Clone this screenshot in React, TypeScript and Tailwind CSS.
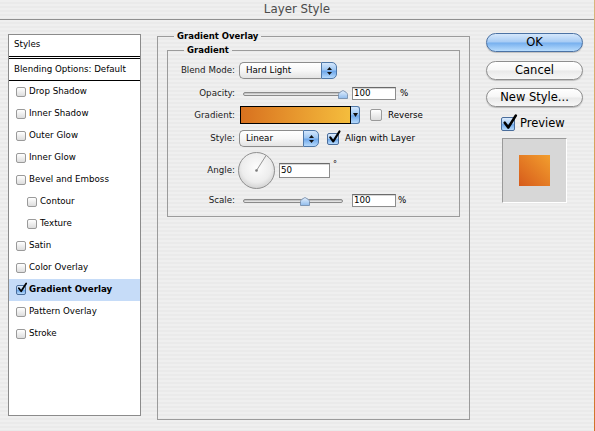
import type { ReactNode } from 'react'

type Effect = { name: string; sub?: boolean; on?: boolean }

const effects: Effect[] = [
  { name: 'Drop Shadow' },
  { name: 'Inner Shadow' },
  { name: 'Outer Glow' },
  { name: 'Inner Glow' },
  { name: 'Bevel and Emboss' },
  { name: 'Contour', sub: true },
  { name: 'Texture', sub: true },
  { name: 'Satin' },
  { name: 'Color Overlay' },
  { name: 'Gradient Overlay', on: true },
  { name: 'Pattern Overlay' },
  { name: 'Stroke' },
]

const boxSizes = {
  sm: 'w-[10px] h-[10px]',
  md: 'w-[12px] h-[12px]',
  lg: 'w-[14px] h-[14px]',
}

function CheckBox({ on = false, size = 'sm' }: { on?: boolean; size?: keyof typeof boxSizes }) {
  return (
    <span
      className={`relative block shrink-0 rounded-[2px] border ${boxSizes[size]} ${
        on
          ? 'border-[#4a6d9b] bg-[linear-gradient(to_bottom,#dcebfc_0%,#a9cdf4_45%,#6fa8ea_55%,#b9dcfc_100%)]'
          : 'border-[#9a9a9a] bg-linear-to-b from-white to-[#dddddd]'
      }`}
    >
      {on && (
        <svg viewBox="0 0 12 12" className="absolute left-[0px] top-[-3px] h-[125%] w-[125%] overflow-visible">
          <path
            d="M2.2 6.2 L5 10 L11 0.5"
            fill="none"
            stroke="#000"
            strokeWidth="2.1"
            strokeLinecap="round"
            strokeLinejoin="round"
          />
        </svg>
      )}
    </span>
  )
}

function Select({ value, width }: { value: string; width: string }) {
  return (
    <div className={`flex h-[17px] shrink-0 ${width}`}>
      <div className="flex flex-1 items-center rounded-l-[5px] border border-r-0 border-[#8c8c8c] bg-linear-to-b from-white via-[#f7f7f7] to-[#e4e4e4] pl-[6px]">
        {value}
      </div>
      <div className="flex w-[16px] flex-col items-center justify-center gap-[2px] rounded-r-[5px] border border-[#4f78a8] bg-[linear-gradient(to_bottom,#d4e7fc_0%,#9ec7f3_45%,#6ea7ea_55%,#b6dafc_100%)]">
        <svg width="5" height="3" viewBox="0 0 5 3">
          <path d="M0 3 L2.5 0 L5 3 Z" fill="#111" />
        </svg>
        <svg width="5" height="3" viewBox="0 0 5 3">
          <path d="M0 0 L2.5 3 L5 0 Z" fill="#111" />
        </svg>
      </div>
    </div>
  )
}

function Slider({ thumb }: { thumb: string }) {
  return (
    <div className="relative ml-[4px] flex h-[13px] w-[100px] shrink-0 items-center">
      <div className="h-[4px] w-full rounded-full border border-[#8a8a8a] bg-linear-to-b from-[#b9b9b9] to-[#f0f0f0]" />
      <svg width="10" height="9" viewBox="0 0 10 9" className={`absolute top-[3px] ${thumb}`}>
        <defs>
          <linearGradient id="thumbFill" x1="0" y1="0" x2="0" y2="1">
            <stop offset="0" stopColor="#e6f1fd" />
            <stop offset="1" stopColor="#8fbbec" />
          </linearGradient>
        </defs>
        <path d="M0.5 8.5 V4.5 Q0.5 3.5 2 2.2 L5 0.5 L8 2.2 Q9.5 3.5 9.5 4.5 V8.5 Z" fill="url(#thumbFill)" stroke="#6d86a6" strokeWidth="0.8" />
      </svg>
    </div>
  )
}

function Field({ value, size }: { value: string; size: string }) {
  return (
    <div className={`flex shrink-0 items-center border border-[#8d8d8d] border-t-[#6b6b6b] bg-white pl-[1px] shadow-[inset_0_1px_0_#d6d6d6] ${size}`}>
      {value}
    </div>
  )
}

function Row({ label, className, children }: { label: string; className: string; children: ReactNode }) {
  return (
    <div className={`flex items-center ${className}`}>
      <span className="mr-[4px] w-[67px] shrink-0 text-right text-[#1a1a1a]">{label}</span>
      {children}
    </div>
  )
}

function AquaButton({ children, primary = false }: { children: ReactNode; primary?: boolean }) {
  return (
    <button
      className={`flex h-[19px] w-[97px] items-center justify-center rounded-full border text-[11.5px] leading-none shadow-[0_1px_1px_rgba(0,0,0,0.2)] ${
        primary
          ? 'border-[#4b72a4] bg-[linear-gradient(to_bottom,#d5e7fb_0%,#a6cbf4_48%,#76afee_52%,#b8dcfd_100%)]'
          : 'border-[#8e8e8e] bg-[linear-gradient(to_bottom,#ffffff_0%,#f6f6f6_48%,#e9e9e9_52%,#f7f7f7_100%)]'
      }`}
    >
      {children}
    </button>
  )
}

export default function App() {
  return (
    <div className="flex h-[431px] w-[595px] overflow-hidden font-['DejaVu_Sans',sans-serif] text-black">
      <div className="flex flex-1 flex-col bg-[repeating-linear-gradient(to_bottom,#efefef_0px,#efefef_2px,#eaeaea_2px,#eaeaea_4px)]">
        <div className="flex h-[20px] shrink-0 items-center justify-center border-b border-[#8f8f8f] text-[11.8px] text-[#4b4b4b]">
          Layer Style
        </div>

        <div className="flex items-start pl-[8px]">
          {/* effect list */}
          <div className="mt-[14px] h-[382px] w-[133px] shrink-0 border border-[#8b8b8b] bg-white text-[8.7px] leading-none">
            <div className="flex h-[24px] items-center border-b-[3px] border-double border-black pb-[2px] pl-[5px]">
              Styles
            </div>
            <div className="flex h-[22px] items-center border-b border-black pb-[1px] pl-[5px]">
              Blending Options: Default
            </div>
            {effects.map((fx) => (
              <div
                key={fx.name}
                className={`flex h-[22px] items-center gap-[3px] pb-[1px] ${fx.sub ? 'pl-[18px]' : 'pl-[7px]'} ${
                  fx.on ? 'bg-[#c6dcf8] font-bold' : ''
                }`}
              >
                <CheckBox on={fx.on} />
                <span>{fx.name}</span>
              </div>
            ))}
          </div>

          {/* settings */}
          <fieldset className="ml-[16px] mt-[10px] h-[390px] w-[313px] shrink-0 border border-[#9b9b9b] px-[9px] pt-[2px]">
            <legend className="ml-[7px] px-[3px] text-[8.5px] font-bold leading-[12px]">Gradient Overlay</legend>
            <fieldset className="border border-[#9b9b9b] pb-[9px] pt-[6px]">
              <legend className="ml-[16px] px-[3px] text-[8.5px] font-bold leading-[12px]">Gradient</legend>
              <div className="flex flex-col text-[8.7px] leading-none">
                <Row label="Blend Mode:" className="h-[17px]">
                  <Select value="Hard Light" width="w-[98px]" />
                </Row>
                <Row label="Opacity:" className="mt-[8px] h-[13px]">
                  <Slider thumb="left-[95px]" />
                  <Field value="100" size="ml-[9px] h-[13px] w-[44px]" />
                  <span className="ml-[4px]">%</span>
                </Row>
                <Row label="Gradient:" className="mt-[6px] h-[18px]">
                  <div className="ml-[1px] h-[18px] w-[111px] shrink-0 border border-black bg-linear-to-r from-[#d8711f] to-[#f4bd3d]" />
                  <div className="flex h-[18px] w-[9px] shrink-0 items-center justify-center rounded-r-[3px] border border-l-0 border-[#4f78a8] bg-[linear-gradient(to_bottom,#d4e7fc_0%,#9ec7f3_45%,#6ea7ea_55%,#b6dafc_100%)]">
                    <svg width="5" height="4" viewBox="0 0 5 4">
                      <path d="M0 0 L2.5 4 L5 0 Z" fill="#111" />
                    </svg>
                  </div>
                  <span className="ml-[10px] flex">
                    <CheckBox size="md" />
                  </span>
                  <span className="ml-[6px]">Reverse</span>
                </Row>
                <Row label="Style:" className="mt-[6px] h-[17px]">
                  <Select value="Linear" width="w-[80px]" />
                  <span className="ml-[8px] flex">
                    <CheckBox on size="md" />
                  </span>
                  <span className="ml-[6px]">Align with Layer</span>
                </Row>
                <Row label="Angle:" className="mt-[5px] h-[37px]">
                  <svg width="37" height="37" viewBox="0 0 37 37" className="-ml-[1px] shrink-0">
                    <defs>
                      <radialGradient id="dialFill" cx="50%" cy="42%" r="58%">
                        <stop offset="0" stopColor="#fdfdfd" />
                        <stop offset="0.7" stopColor="#ededed" />
                        <stop offset="1" stopColor="#d2d2d2" />
                      </radialGradient>
                    </defs>
                    <circle cx="18.5" cy="18.5" r="18" fill="url(#dialFill)" stroke="#8f8f8f" />
                    <line x1="18.5" y1="18.5" x2="28" y2="3.6" stroke="#7c7c7c" strokeWidth="0.8" />
                    <circle cx="18.5" cy="18.5" r="1.3" fill="#7a7a7a" />
                  </svg>
                  <Field value="50" size="ml-[4px] h-[15px] w-[51px]" />
                  <span className="ml-[3px] mb-[12px] text-[8px]">°</span>
                </Row>
                <Row label="Scale:" className="mt-[5px] h-[13px]">
                  <Slider thumb="left-[57px]" />
                  <Field value="100" size="ml-[9px] h-[13px] w-[44px]" />
                  <span className="ml-[2px]">%</span>
                </Row>
              </div>
            </fieldset>
          </fieldset>

          {/* actions + preview */}
          <div className="ml-[16px] mt-[13px] flex w-[97px] shrink-0 flex-col">
            <AquaButton primary>OK</AquaButton>
            <div className="mt-[9px]">
              <AquaButton>Cancel</AquaButton>
            </div>
            <div className="mt-[8px]">
              <AquaButton>New Style...</AquaButton>
            </div>
            <div className="ml-[15px] mt-[10px] flex h-[14px] items-center gap-[5px] text-[11.5px] leading-none">
              <CheckBox on size="lg" />
              <span>Preview</span>
            </div>
            <div className="ml-[16px] mt-[7px] flex h-[65px] w-[65px] items-center justify-center border border-[#9a9a9a] border-b-white border-r-white bg-[#d7d7d7]">
              <div className="h-[31px] w-[31px] bg-linear-to-tr from-[#d65a1b] to-[#f29e2e]" />
            </div>
          </div>
        </div>
      </div>
      <div className="w-[1px] shrink-0 bg-linear-to-b from-[#d9b57c] via-[#d59a4a] to-[#d2722a]" />
    </div>
  )
}
